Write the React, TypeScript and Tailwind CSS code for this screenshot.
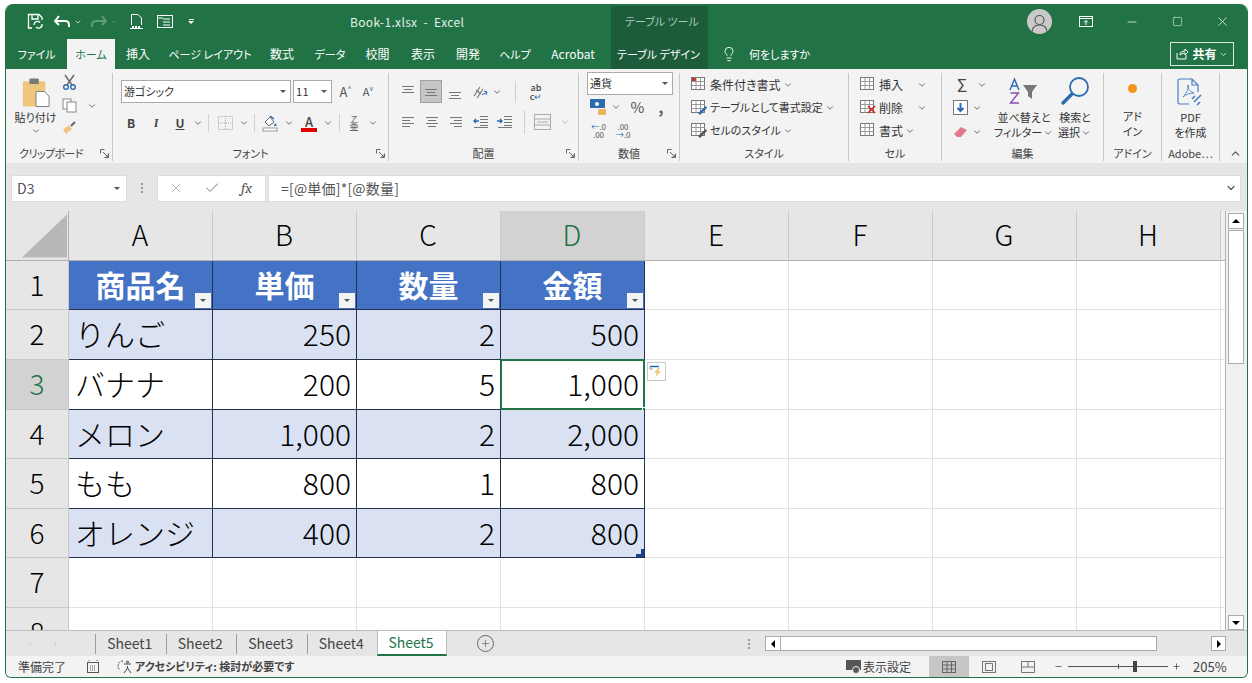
import type { ReactNode } from "react";
import { ChevronDown, ChevronUp, Lightbulb, Minus, Plus, X, Check, Square } from "lucide-react";

const FONT = { fontFamily: '"Noto Sans CJK JP", "Noto Sans", sans-serif' };

function Chev({ w = 12, size = 10, className = "text-[#555]" }: { w?: number; size?: number; className?: string }) {
  return (
    <span className="flex shrink-0 items-center justify-center" style={{ width: w }}>
      <ChevronDown size={size} strokeWidth={2} className={className} />
    </span>
  );
}

function Slot({ w, children, className = "" }: { w: number; children?: ReactNode; className?: string }) {
  return (
    <span className={`flex shrink-0 items-center justify-center ${className}`} style={{ width: w }}>
      {children}
    </span>
  );
}

function Launcher() {
  return (
    <svg width="9" height="9" viewBox="0 0 9 9" className="shrink-0 text-[#666]" fill="none" stroke="currentColor">
      <path d="M4.5 .5H.5V4.5M8.5 4.5V8.5H4.5M3 3L8 8M8 5.5V8H5.5" />
    </svg>
  );
}

function Lines({ kind, w = 14 }: { kind: "l" | "c" | "r" | "t" | "m" | "b"; w?: number }) {
  const rows: [number, number][] =
    kind === "l"
      ? [[1, 13], [1, 9], [1, 13], [1, 9]]
      : kind === "r"
        ? [[1, 13], [5, 13], [1, 13], [5, 13]]
        : kind === "c"
          ? [[1, 13], [3, 11], [1, 13], [3, 11]]
          : [[1, 13], [3, 11], [1, 13]];
  const top = kind === "t" ? 1 : kind === "m" ? 4 : kind === "b" ? 7 : 2;
  return (
    <svg width={w} height="14" viewBox="0 0 14 14" stroke="#777" fill="none">
      {rows.map(([a, b], i) => (
        <path key={i} d={`M${a} ${top + i * 3 + 0.5}H${b}`} />
      ))}
    </svg>
  );
}

function Indent({ out }: { out?: boolean }) {
  return (
    <svg width="16" height="14" viewBox="0 0 16 14" fill="none">
      <path d="M7 1.5H15M7 4.5H15M7 7.5H15M7 10.5H15M1 12.5H15" stroke="#777" />
      <path d={out ? "M6 6H1M3 4L1 6L3 8" : "M0 6H5M3 4L5 6L3 8"} stroke="#2b6cb0" strokeWidth="1.4" />
    </svg>
  );
}

function TableIcon({ mark }: { mark?: ReactNode }) {
  return (
    <svg width="16" height="16" viewBox="0 0 16 16" fill="none" className="shrink-0">
      <rect x=".5" y=".5" width="13" height="12" fill="#fff" stroke="#777" />
      <path d="M.5 4.5H13.5M.5 8.5H13.5M5 .5V12.5M9.5 .5V12.5" stroke="#999" />
      {mark}
    </svg>
  );
}

function RibbonGroup({ width, label, launcher, labelClass = "", children }: { width: number; label: string; launcher?: boolean; labelClass?: string; children: ReactNode }) {
  return (
    <div className="flex shrink-0 flex-col border-r border-[#c8c8c8] mt-[4px] mb-[2px]" style={{ width, height: 88 }}>
      <div className="h-[72px] overflow-visible">{children}</div>
      <div className={`relative flex h-[16px] items-center justify-center text-[11px] leading-none text-[#444] ${labelClass}`}>
        {label}
        {launcher && (
          <span className="absolute right-[3px] top-[4px]">
            <Launcher />
          </span>
        )}
      </div>
    </div>
  );
}

function Combo({ width, text, mono }: { width: number; text: string; mono?: boolean }) {
  return (
    <div className="flex h-[23px] items-center border border-[#ababab] bg-white pl-[2px] pr-[4px]" style={{ width }}>
      <span className={`flex-1 text-[11px] text-[#333] ${mono ? "tracking-wide" : ""}`}>{text}</span>
      <span className="h-0 w-0 border-x-[3px] border-t-[3px] border-x-transparent border-t-[#555]" />
    </div>
  );
}

function FontGroup() {
  return (
    <RibbonGroup width={276} label="フォント" launcher>
      <div className="flex items-center pl-[8px] pt-[7px]">
        <Combo width={170} text="游ゴシック" />
        <span className="w-[2px]" />
        <Combo width={39} text="11" mono />
        <Slot w={25} className="ml-[1px] text-[13px] text-[#555]">A<sup className="text-[7px] text-[#2b6cb0]">^</sup></Slot>
        <Slot w={20} className="text-[11px] text-[#555]">A<sup className="text-[7px] text-[#2b6cb0]">v</sup></Slot>
      </div>
      <div className="mt-[8px] flex h-[24px] items-center pl-[6px] text-[12px] text-[#444]">
        <Slot w={24} className="font-bold">B</Slot>
        <Slot w={26} className="font-serif italic font-bold">I</Slot>
        <Slot w={22} className="font-bold underline">U</Slot>
        <Chev w={13} />
        <span className="mx-[4px] h-[18px] w-px bg-[#d0d0d0]" />
        <Slot w={24}>
          <svg width="15" height="14" viewBox="0 0 15 14" fill="none">
            <rect x=".5" y=".5" width="14" height="13" stroke="#aaa" strokeDasharray="1 1" />
            <path d="M7.5 0V14M0 7H15" stroke="#aaa" strokeDasharray="1 1" />
          </svg>
        </Slot>
        <Chev w={13} />
        <span className="mx-[4px] h-[18px] w-px bg-[#d0d0d0]" />
        <Slot w={22}>
          <svg width="17" height="17" viewBox="0 0 17 17" fill="none">
            <path d="M3 7L8 2L12 7L7 11Z" fill="#fff" stroke="#666" />
            <path d="M8 1L12 4" stroke="#2b6cb0" strokeWidth="1.5" />
            <rect x="1" y="13" width="14" height="3" fill="#fff" stroke="#999" />
            <path d="M13 8L15 11H12Z" fill="#2b6cb0" />
          </svg>
        </Slot>
        <Chev w={15} />
        <Slot w={22} className="ml-[2px]">
          <span className="flex flex-col items-center text-[13px] font-medium leading-[13px] text-[#444]">
            A
            <span className="h-[4px] w-[16px] bg-[#e00000]" />
          </span>
        </Slot>
        <Chev w={16} />
        <span className="mx-[3px] h-[18px] w-px bg-[#d0d0d0]" />
        <Slot w={22} className="text-[9px] leading-[9px]">
          <span className="flex flex-col items-center">
            <span className="text-[7px] leading-[7px]">ア</span>亜
          </span>
        </Slot>
        <Chev w={16} />
      </div>
    </RibbonGroup>
  );
}

function AlignGroup() {
  return (
    <RibbonGroup width={190} label="配置" launcher>
      <div className="flex h-[23px] items-center pl-[7px] mt-[7px]">
        <Slot w={24}><Lines kind="t" /></Slot>
        <Slot w={22} className="h-[23px] border border-[#a0a0a0] bg-[#c6c6c6]"><Lines kind="m" /></Slot>
        <Slot w={26}><Lines kind="b" /></Slot>
        <Slot w={23}>
          <svg width="18" height="16" viewBox="0 0 18 16" fill="none">
            <path d="M3 12L9 3M6 14L12 5M5 6l5 4" stroke="#777" strokeWidth="1.2" />
            <path d="M11 11L16 8M16 8L13 7M16 8L15 11" stroke="#2b6cb0" />
          </svg>
        </Slot>
        <Chev w={12} />
        <span className="mx-[12px] h-[22px] w-px bg-[#d0d0d0]" />
        <span className="ml-[-1px] flex w-[18px] flex-col items-center text-[9px] font-medium leading-[9px] text-[#444]">
          ab
          <span>c<span className="text-[#2b6cb0]">↵</span></span>
        </span>
      </div>
      <div className="mt-[7px] flex h-[24px] items-center pl-[7px]">
        <Slot w={24}><Lines kind="l" /></Slot>
        <Slot w={24}><Lines kind="c" /></Slot>
        <Slot w={24}><Lines kind="r" /></Slot>
        <Slot w={25}><Indent out /></Slot>
        <Slot w={24}><Indent /></Slot>
        <span className="mx-[7px] h-[24px] w-px bg-[#d0d0d0]" />
        <Slot w={20}>
          <svg width="17" height="16" viewBox="0 0 17 16" fill="none" stroke="#aaa">
            <rect x=".5" y=".5" width="16" height="15" />
            <path d="M0 5H17M0 11H17M3 8H14" />
          </svg>
        </Slot>
        <Chev w={26} className="text-[#aaa]" />
      </div>
    </RibbonGroup>
  );
}

function NumberGroup() {
  return (
    <RibbonGroup width={101} label="数値" launcher>
      <div className="-mt-[1px] pl-[8px]">
        <Combo width={86} text="通貨" />
      </div>
      <div className="mt-[2px] flex h-[20px] items-center pl-[10px] text-[15px] text-[#555]">
        <Slot w={20}>
          <svg width="18" height="17" viewBox="0 0 18 17">
            <rect x="0" y="0" width="15" height="9" fill="#2b6cb0" />
            <circle cx="7" cy="5" r="2" fill="#fff" />
            <rect x="8" y="10" width="8" height="6" fill="#e8b860" />
          </svg>
        </Slot>
        <Chev w={14} />
        <Slot w={29}>%</Slot>
        <Slot w={18} className="font-bold">,</Slot>
      </div>
      <div className="mt-[4px] flex h-[20px] items-center pl-[9px] text-[8px] leading-[8px] text-[#555]">
        <Slot w={21}><span className="text-center"><span className="text-[#2b6cb0]">←</span>.0<br />.00</span></Slot>
        <Slot w={28}><span className="text-center">.00<br /><span className="text-[#2b6cb0]">→</span>.0</span></Slot>
      </div>
    </RibbonGroup>
  );
}

function StyleRow({ icon, text, small }: { icon: ReactNode; text: string; small?: boolean }) {
  return (
    <div className={`flex h-[23px] items-center pl-[11px] text-[#333] ${small ? "text-[11px]" : "text-[12px]"}`}>
      {icon}
      <span className="ml-[3px] whitespace-nowrap">{text}</span>
      <Chev w={14} />
    </div>
  );
}

function CellRow({ text, chevW, gap, mark }: { text: string; chevW: number; gap: number; mark?: ReactNode }) {
  return (
    <div className="flex h-[23px] items-center pl-[11px] text-[12px] text-[#333]">
      <TableIcon mark={mark} />
      <span className="ml-[3px]">{text}</span>
      <span style={{ width: gap }} />
      <Chev w={chevW} />
    </div>
  );
}

function EditGroup() {
  return (
    <RibbonGroup width={162} label="編集">
      <div className="flex">
        <div className="w-[56px] pl-[11px]">
          <div className="flex h-[23px] items-center">
            <span className="flex w-[18px] justify-center text-[17px] leading-none text-[#444]">Σ</span>
            <Chev w={22} />
          </div>
          <div className="flex h-[24px] items-center">
            <svg width="16" height="16" viewBox="0 0 16 16" fill="none" className="shrink-0">
              <rect x=".5" y=".5" width="14" height="14" fill="#fff" stroke="#777" />
              <path d="M7.5 3V11M4.5 8L7.5 11L10.5 8" stroke="#2b6cb0" strokeWidth="2" />
            </svg>
            <Chev w={15} />
          </div>
          <div className="flex h-[24px] items-center">
            <svg width="16" height="14" viewBox="0 0 16 14" className="shrink-0">
              <path d="M1 9L8 2L14 5L8 12H4Z" fill="#e07a90" />
            </svg>
            <Chev w={15} />
          </div>
        </div>
        <div className="flex w-[52px] flex-col items-center pt-[4px] text-[11px] leading-[15px] text-[#333]">
          <svg width="30" height="30" viewBox="0 0 30 30" fill="none" className="shrink-0">
            <path d="M1 13L5.5 2L10 13M3 9H8" stroke="#2b6cb0" strokeWidth="1.4" />
            <path d="M1.5 16H9.5L1.5 26H10" stroke="#8a4fb5" strokeWidth="1.4" />
            <path d="M14 8H28L23 15V22L19 19V15Z" fill="#777" />
          </svg>
          <span className="mt-[3px] whitespace-nowrap">並べ替えと</span>
          <span className="flex whitespace-nowrap">フィルター<Chev w={12} /></span>
        </div>
        <div className="ml-[2px] flex w-[46px] flex-col items-center pt-[3px] text-[11px] leading-[15px] text-[#333]">
          <svg width="30" height="30" viewBox="0 0 30 30" fill="none" stroke="#2b6cb0" className="shrink-0">
            <circle cx="19" cy="11" r="9" strokeWidth="1.8" />
            <path d="M12 18L3 27" strokeWidth="3.4" strokeLinecap="round" />
          </svg>
          <span className="mt-[4px]">検索と</span>
          <span className="flex whitespace-nowrap">選択<Chev w={12} /></span>
        </div>
      </div>
    </RibbonGroup>
  );
}

function Ribbon() {
  return (
    <div className="flex h-[94px] bg-[#f3f3f3] [font-feature-settings:'palt']">
      <RibbonGroup width={107} label="クリップボード" launcher labelClass="pr-[16px] tracking-[-0.6px]">
        <div className="flex pl-[8px]">
          <div className="flex w-[43px] flex-col items-center pt-[4px] text-[11px] leading-[14px] text-[#333]">
            <svg width="28" height="31" viewBox="0 0 30 32" className="shrink-0">
              <rect x="1" y="4" width="24" height="27" rx="1" fill="#eec77d" />
              <rect x="8" y="1" width="10" height="6" rx="1" fill="#777" />
              <path d="M15 15H24L29 20V31H15Z" fill="#fff" stroke="#777" />
            </svg>
            <span className="mt-[2px] whitespace-nowrap">貼り付け</span>
            <span className="mt-[2px]"><Chev w={12} /></span>
          </div>
          <div className="flex w-[24px] flex-col items-center gap-[8px] pt-[1px]">
            <svg width="15" height="16" viewBox="0 0 15 16" fill="none">
              <path d="M3 1L10 11M12 1L5 11" stroke="#666" strokeWidth="1.4" />
              <circle cx="4" cy="13" r="2.3" stroke="#2b6cb0" strokeWidth="1.4" />
              <circle cx="11" cy="13" r="2.3" stroke="#2b6cb0" strokeWidth="1.4" />
            </svg>
            <svg width="15" height="15" viewBox="0 0 15 15" fill="#fff" stroke="#888">
              <rect x="1" y="1" width="8" height="10" />
              <rect x="5" y="4" width="9" height="10" />
            </svg>
            <svg width="15" height="14" viewBox="0 0 15 14">
              <path d="M1 9L7 4L10 8L4 13Z" fill="#eec77d" />
              <path d="M9 5L13 1" stroke="#666" strokeWidth="2" />
            </svg>
          </div>
          <div className="ml-[5px] pt-[28px]"><Chev w={12} /></div>
        </div>
      </RibbonGroup>
      <FontGroup />
      <AlignGroup />
      <NumberGroup />
      <RibbonGroup width={169} label="スタイル">
        <StyleRow icon={<TableIcon mark={<rect x="1" y="1" width="4" height="3" fill="#c0392b" />} />} text="条件付き書式" />
        <StyleRow small icon={<TableIcon mark={<path d="M7 13L15 6L16 8L9 15Z" fill="#2b6cb0" />} />} text="テーブルとして書式設定" />
        <StyleRow small icon={<TableIcon mark={<path d="M7 13L15 6L16 8L9 15Z" fill="#555" />} />} text="セルのスタイル" />
      </RibbonGroup>
      <RibbonGroup width={93} label="セル">
        <CellRow text="挿入" gap={12} chevW={14} />
        <CellRow text="削除" gap={12} chevW={14} mark={<path d="M8 6L15 13M15 6L8 13" stroke="#d02020" strokeWidth="1.6" />} />
        <CellRow text="書式" gap={0} chevW={14} />
      </RibbonGroup>
      <EditGroup />
      <RibbonGroup width={58} label="アドイン">
        <div className="flex flex-col items-center pt-[11px] text-[11px] leading-[15px] text-[#333]">
          <span className="h-[9px] w-[9px] rounded-full bg-[#f7931e]" />
          <span className="mt-[16px]">アド</span>
          <span>イン</span>
        </div>
      </RibbonGroup>
      <RibbonGroup width={58} label="Adobe…">
        <div className="flex flex-col items-center pt-[5px] text-[11px] leading-[15px] text-[#333]">
          <svg width="30" height="28" viewBox="0 0 30 28" fill="none" stroke="#4a7fc1" strokeWidth="1.2" className="shrink-0">
            <path d="M4 1H16L22 7V14M16 1V7H22M4 1Q2 1 2 3V24Q2 26 4 26H13" />
            <path d="M7 19C11 15 13 9 12 7C11 9 14 14 18 15C15 15 10 16 7 19Z" strokeWidth=".9" />
            <path d="M18 24L25 17M16 21L19 18M21 27L24 24" strokeWidth="1.6" />
          </svg>
          <span className="mt-[4px]">PDF</span>
          <span>を作成</span>
        </div>
      </RibbonGroup>
      <div className="flex flex-1 items-end justify-center pb-[3px] pl-[3px]">
        <ChevronUp size={13} className="text-[#555]" />
      </div>
    </div>
  );
}

const TABS: [string, number, string][] = [
  ["ファイル", 61, "text-[11px]"],
  ["ホーム", 48, "text-[11px]"],
  ["挿入", 46, ""],
  ["ページ レイアウト", 98, "text-[11px]"],
  ["数式", 46, ""],
  ["データ", 50, "text-[11px]"],
  ["校閲", 45, ""],
  ["表示", 46, ""],
  ["開発", 44, ""],
  ["ヘルプ", 50, "text-[11px]"],
  ["Acrobat", 70, "pr-[4px]"],
];

function TitleBar() {
  return (
    <div className="relative h-[65px] shrink-0 bg-[#217346] text-white [font-feature-settings:'palt']">
      <div className="absolute left-[605px] top-[2px] h-[63px] w-[97px] bg-[#1c5c3a]" />
      <div className="relative flex h-[35px] items-center">
        <div className="flex w-[344px] items-center pl-[21px]">
          <svg width="17" height="17" viewBox="0 0 17 17" fill="none" stroke="#fff" strokeWidth="1.3">
            <path d="M5 15H1.5V1.5H12L15 4.5V7" />
            <path d="M5 1.5V6H11V1.5" />
            <path d="M7 12A3.5 3.5 0 0 1 13 9.5M15 11A3.5 3.5 0 0 1 9 14" />
          </svg>
          <svg width="17" height="14" viewBox="0 0 17 14" fill="none" stroke="#fff" strokeWidth="2" className="ml-[10px]">
            <path d="M1 6H11Q15 6 15 10V12M5 1L1 6L5 10" />
          </svg>
          <Chev w={13} size={8} className="text-white" />
          <svg width="17" height="14" viewBox="0 0 17 14" fill="none" stroke="#5f9c7c" strokeWidth="2" className="ml-[6px]">
            <path d="M16 6H6Q2 6 2 10V12M12 1L16 6L12 10" />
          </svg>
          <Chev w={13} size={8} className="text-[#5f9c7c]" />
          <svg width="15" height="17" viewBox="0 0 15 17" fill="none" stroke="#fff" className="ml-[9px]">
            <path d="M2.5 12V1.5H9L12.5 5V12M1 15.5H14" />
            <path d="M3 14H12" strokeDasharray="2 1" strokeWidth="2" />
          </svg>
          <svg width="16" height="13" viewBox="0 0 16 13" fill="none" stroke="#fff" className="ml-[13px]">
            <rect x=".5" y=".5" width="15" height="12" />
            <path d="M6 4H13M6 7H13M6 10H13M.5 3H6" />
          </svg>
          <span className="ml-[15px] flex flex-col items-center gap-[1px]">
            <span className="h-px w-[5px] bg-white" />
            <span className="h-0 w-0 border-x-[3px] border-t-[3px] border-x-transparent border-t-white" />
          </span>
        </div>
        <span className="text-[12px] tracking-[0.35px] text-[#e4efe9]">Book-1.xlsx&nbsp;&nbsp;-&nbsp;&nbsp;Excel</span>
        <span className="absolute left-[619px] text-[11px] text-[#a9c7b6]">テーブル ツール</span>
        <div className="ml-auto flex items-center pr-[13px]">
          <span className="flex h-[25px] w-[25px] items-end justify-center overflow-hidden rounded-full bg-[#c9c9c9]">
            <svg width="19" height="21" viewBox="0 0 19 21" fill="none" stroke="#555" strokeWidth="1.2">
              <circle cx="9.5" cy="7" r="4.5" />
              <path d="M2 20Q2 12 9.5 12Q17 12 17 20" />
            </svg>
          </span>
          <Slot w={68}>
            <svg width="14" height="11" viewBox="0 0 14 11" fill="none" stroke="#fff">
              <rect x=".5" y=".5" width="13" height="10" />
              <path d="M0 2.5H14M7 9V4.5M5 6.5L7 4.5L9 6.5" />
            </svg>
          </Slot>
          <Slot w={24}><Minus size={14} strokeWidth={1.2} /></Slot>
          <Slot w={66}><Square size={11} strokeWidth={1.2} /></Slot>
          <Slot w={24}><X size={15} strokeWidth={1.2} /></Slot>
        </div>
      </div>
      <div className="relative flex h-[30px] items-stretch text-[12px] leading-none">
        {TABS.map(([t, w, extra]) => (
          <span
            key={t}
            className={`flex shrink-0 items-center justify-center whitespace-nowrap ${t === "ホーム" ? "bg-[#f3f3f3] text-[#217346]" : "text-white"} ${extra}`}
            style={{ width: w }}
          >
            {t}
          </span>
        ))}
        <span className="flex w-[97px] shrink-0 items-center justify-center whitespace-nowrap text-[11px]">テーブル デザイン</span>
        <Slot w={40} className="ml-[2px]"><Lightbulb size={16} strokeWidth={1.4} /></Slot>
        <span className="flex items-center text-[11px]">何をしますか</span>
        <div className="ml-auto mr-[13px] mb-[3px] mt-[3px] flex w-[64px] items-center justify-center border border-[#d7e6dd] text-[12px] font-bold">
          <svg width="13" height="12" viewBox="0 0 13 12" fill="none" stroke="#fff" className="mr-[3px]">
            <path d="M1 5V11H10V7M4 7Q4 3 9 3V1L12 4L9 7V5Q6 5 4 7Z" />
          </svg>
          共有
          <ChevronDown size={9} className="ml-[2px]" />
        </div>
      </div>
    </div>
  );
}

function FormulaBar() {
  return (
    <div className="flex h-[48px] shrink-0 items-center bg-[#e6e6e6] pl-[5px] pr-[6px] pt-[2px]">
      <div className="flex h-[27px] w-[116px] items-center border border-[#dcdcdc] bg-white pl-[5px] pr-[6px]">
        <span className="flex-1 text-[14px] text-[#555]">D3</span>
        <span className="h-0 w-0 border-x-[3px] border-t-[3px] border-x-transparent border-t-[#555]" />
      </div>
      <span className="flex w-[30px] flex-col items-center gap-[2px]">
        <i className="h-[2px] w-[2px] bg-[#999]" />
        <i className="h-[2px] w-[2px] bg-[#999]" />
        <i className="h-[2px] w-[2px] bg-[#999]" />
      </span>
      <div className="flex h-[27px] w-[109px] items-center border border-[#dcdcdc] bg-white pl-[5px]">
        <Slot w={25}><X size={16} strokeWidth={1.3} className="text-[#aaa]" /></Slot>
        <Slot w={48}><Check size={16} strokeWidth={1.6} className="text-[#aaa]" /></Slot>
        <span className="ml-[5px] font-serif text-[15px] italic text-[#555]">fx</span>
      </div>
      <div className="ml-[2px] flex h-[27px] flex-1 items-center border border-[#dcdcdc] bg-white pl-[12px] pr-[3px]">
        <span className="flex-1 text-[14px] tracking-[0.2px] text-[#555]">=[@単価]*[@数量]</span>
        <ChevronDown size={12} strokeWidth={2.4} className="text-[#555]" />
      </div>
    </div>
  );
}

const COLS = ["A", "B", "C", "D", "E", "F", "G", "H"];
const ROWS: (string | null)[][] = [
  ["商品名", "単価", "数量", "金額"],
  ["りんご", "250", "2", "500"],
  ["バナナ", "200", "5", "1,000"],
  ["メロン", "1,000", "2", "2,000"],
  ["もも", "800", "1", "800"],
  ["オレンジ", "400", "2", "800"],
  [null, null, null, null],
  [null, null, null, null],
];
const HEIGHTS = [49, 50, 50, 49, 50, 49, 50, 50];

function FilterBtn() {
  return (
    <span className="absolute bottom-[1px] right-[1px] flex h-[15px] w-[16px] items-center justify-center bg-[#f3f3f3]">
      <span className="h-0 w-0 border-x-[3px] border-t-[3px] border-x-transparent border-t-[#555]" />
    </span>
  );
}

function DataCell({ r, c, v }: { r: number; c: number; v: string | null }) {
  const inTable = r < 6 && c < 4;
  const isHead = r === 0 && inTable;
  const isBand = inTable && r % 2 === 1;
  const selected = r === 2 && c === 3;
  const bg = isHead ? "bg-[#4472c4]" : isBand ? "bg-[#d9e1f2]" : "bg-white";
  const border = inTable
    ? "border-r border-b border-[#25324d]"
    : "border-r border-b border-[#e1e1e1]";
  const align = isHead ? "justify-center font-bold text-white" : c === 0 ? "justify-start pl-[6px] font-light text-black" : "justify-end pr-[5px] font-light text-black";
  return (
    <div className={`relative flex items-center overflow-visible pb-[3px] text-[30px] leading-none ${bg} ${border} ${align}`}>
      {v}
      {isHead && <FilterBtn />}
      {selected && (
        <>
          <span className="pointer-events-none absolute -left-px -top-px bottom-[-1px] right-[-1px] border-2 border-[#217346]" />
          <span className="absolute bottom-[-3px] right-[-3px] h-[5px] w-[5px] border border-white bg-[#217346]" />
          <span className="absolute left-[146px] top-[2px] z-10 flex h-[19px] w-[19px] items-center justify-center border border-[#c8c8c8] bg-white">
            <svg width="15" height="15" viewBox="0 0 15 15" fill="none">
              <path d="M1 2.5H10" stroke="#2b6cb0" strokeWidth="1.5" />
              <path d="M1 2.5V5H4" stroke="#999" />
              <path d="M9 4L5 9H8L6 14L12 7H9L11 4Z" fill="#eec77d" />
            </svg>
          </span>
        </>
      )}
      {r === 5 && c === 3 && (
        <svg width="8" height="8" viewBox="0 0 8 8" className="absolute bottom-0 right-0">
          <path d="M8 0V8H0V5H5V0Z" fill="#1f3f8f" />
        </svg>
      )}
    </div>
  );
}

function Sheet() {
  return (
    <div className="flex min-h-0 flex-1 bg-white">
      <div className="min-w-0 flex-1 overflow-hidden">
        <div
          className="grid w-[1220px] grid-cols-[63px_144px_144px_144px_144px_144px_144px_144px_144px_5px]"
          style={{ gridTemplateRows: `50px ${HEIGHTS.map((h) => `${h}px`).join(" ")}` }}
        >
          <div className="relative border-b border-r border-[#b0b0b0] bg-[#e6e6e6]">
            <svg width="45" height="44" viewBox="0 0 46 44" className="absolute bottom-[2px] right-[1px]">
              <path d="M46 0V44H0Z" fill="#b7b7b7" />
            </svg>
          </div>
          {COLS.map((c) => (
            <div
              key={c}
              className={`flex items-center justify-center border-b border-r border-b-[#b0b0b0] border-r-[#c8c8c8] pb-[3px] pr-[1px] text-[28px] font-light leading-none ${c === "D" ? "bg-[#d2d2d2] text-[#217346]" : "bg-[#e6e6e6] text-black"}`}
            >
              {c}
            </div>
          ))}
          <div className="border-b border-r border-b-[#b0b0b0] border-r-[#b0b0b0] bg-[#f0f0f0]" />
          {ROWS.map((row, r) => (
            <div key={r} className="contents">
              <div
                className={`flex items-center justify-center border-b border-r border-[#c8c8c8] pb-[3px] text-[28px] font-light leading-none ${r === 2 ? "bg-[#d2d2d2] text-[#217346]" : "bg-[#e6e6e6] text-black"}`}
              >
                {r + 1}
              </div>
              {COLS.map((_, c) => (
                <DataCell key={c} r={r} c={c} v={c < 4 ? row[c] : null} />
              ))}
              <div className="border-b border-r border-b-[#e1e1e1] border-r-[#b0b0b0]" />
            </div>
          ))}
        </div>
      </div>
      <div className="flex w-[21px] shrink-0 flex-col bg-[#f0f0f0] pl-[2px] pr-[3px] pt-[2px]">
        <div className="flex h-[16px] items-center justify-center border border-[#ababab] bg-white">
          <span className="h-0 w-0 border-x-[4px] border-b-[4px] border-x-transparent border-b-black" />
        </div>
        <div className="mt-[1px] h-[134px] border border-[#ababab] bg-white" />
        <div className="flex-1" />
        <div className="flex h-[15px] items-center justify-center border border-[#ababab] bg-white">
          <span className="h-0 w-0 border-x-[4px] border-t-[4px] border-x-transparent border-t-black" />
        </div>
      </div>
    </div>
  );
}

function SheetTabs() {
  const names = ["Sheet1", "Sheet2", "Sheet3", "Sheet4"];
  return (
    <div className="flex h-[26px] shrink-0 items-center border-t border-[#bdbdbd] bg-[#e6e6e6] text-[14px] text-[#444]">
      <span className="flex w-[89px] items-center pl-[23px] text-[9px] text-[#bbb]">
        <span>‹</span>
        <span className="ml-[22px]">›</span>
      </span>
      {names.map((n) => (
        <span key={n} className="flex h-[20px] w-[70.5px] items-center justify-center border-l border-[#9d9d9d] pr-[2px]">
          {n}
        </span>
      ))}
      <span className="flex h-[25px] w-[70px] items-center justify-center border-x border-b-2 border-[#bdbdbd] border-b-[#217346] bg-white pr-[2px] text-[#217346]">
        Sheet5
      </span>
      <span className="ml-[30px] flex h-[17px] w-[17px] items-center justify-center rounded-full border border-[#666]">
        <Plus size={11} strokeWidth={1.2} />
      </span>
      <span className="ml-[254px] flex flex-col gap-[2px]">
        <i className="h-[2px] w-[2px] bg-[#999]" />
        <i className="h-[2px] w-[2px] bg-[#999]" />
        <i className="h-[2px] w-[2px] bg-[#999]" />
      </span>
      <div className="ml-[15px] flex h-[15px] w-[461px]">
        <span className="flex w-[16px] items-center justify-center border border-[#ababab] bg-white">
          <span className="h-0 w-0 border-y-[4px] border-r-[4px] border-y-transparent border-r-black" />
        </span>
        <span className="w-[376px] border-y border-r border-[#ababab] bg-white" />
        <span className="flex-1" />
        <span className="flex w-[15px] items-center justify-center border border-[#ababab] bg-white">
          <span className="h-0 w-0 border-y-[4px] border-l-[4px] border-y-transparent border-l-black" />
        </span>
      </div>
    </div>
  );
}

function StatusBar() {
  return (
    <div className="flex h-[21px] shrink-0 items-center bg-[#f3f3f3] pl-[12px] pr-[20px] text-[12px] text-[#444] [font-feature-settings:'palt']">
      <span>準備完了</span>
      <svg width="12" height="13" viewBox="0 0 12 13" className="ml-[21px]" fill="none" stroke="#555">
        <rect x=".5" y="2.5" width="11" height="10" />
        <path d="M2 0V3M10 0V3M3 6H9M3 8H9M3 10H9" strokeDasharray="1 1" />
      </svg>
      <svg width="16" height="15" viewBox="0 0 16 15" className="ml-[18px]" fill="none" stroke="#444">
        <path d="M6 2A5 5 0 0 0 3 11" strokeDasharray="2 1" />
        <path d="M7 5H14M10.5 7V9M7 14L10.5 9L14 14" />
        <circle cx="10.5" cy="3" r="1" />
      </svg>
      <span className="ml-[2px] text-[11px] font-bold">アクセシビリティ: 検討が必要です</span>
      <svg width="16" height="14" viewBox="0 0 16 14" className="ml-auto">
        <rect x="0" y="0" width="15" height="10" fill="#555" />
        <circle cx="10" cy="10" r="3.5" fill="#555" stroke="#f3f3f3" />
      </svg>
      <span className="ml-[1px] w-[66px] text-[12px]">表示設定</span>
      <Slot w={40} className="h-[21px] bg-[#c6c6c6]">
        <svg width="14" height="12" viewBox="0 0 14 12" fill="none" stroke="#666">
          <rect x=".5" y=".5" width="13" height="11" />
          <path d="M5 0V12M9.5 0V12M0 4H14M0 8H14" />
        </svg>
      </Slot>
      <Slot w={40}>
        <svg width="14" height="12" viewBox="0 0 14 12" fill="none" stroke="#777">
          <rect x=".5" y=".5" width="13" height="11" />
          <rect x="3.5" y="2.5" width="7" height="7" />
        </svg>
      </Slot>
      <Slot w={38}>
        <svg width="14" height="12" viewBox="0 0 14 12" fill="none" stroke="#777">
          <path d="M.5 0V11.5H13.5V0M.5 .5H13.5M7 0V6M.5 6H13.5" />
        </svg>
      </Slot>
      <span className="ml-[5px] flex w-[12px] justify-center"><Minus size={9} /></span>
      <span className="relative ml-[4px] h-px w-[100px] bg-[#555]">
        <span className="absolute left-[50px] top-[-2px] h-[5px] w-px bg-[#555]" />
        <span className="absolute left-[65px] top-[-5px] h-[11px] w-[4px] bg-[#444]" />
      </span>
      <span className="flex w-[16px] justify-center"><Plus size={9} /></span>
      <span className="ml-[9px] w-[34px] whitespace-nowrap text-[13px]">205%</span>
    </div>
  );
}

export default function App() {
  return (
    <div className="h-[683px] w-[1252px] overflow-hidden bg-white pb-[5px] pl-[5px] pr-[4px] pt-[4px]" style={FONT}>
      <div className="flex h-full w-full flex-col overflow-hidden rounded-t-[8px] rounded-b-[6px] border-b border-l border-r border-[#217346]">
        <TitleBar />
        <Ribbon />
        <FormulaBar />
        <Sheet />
        <SheetTabs />
        <StatusBar />
      </div>
    </div>
  );
}
